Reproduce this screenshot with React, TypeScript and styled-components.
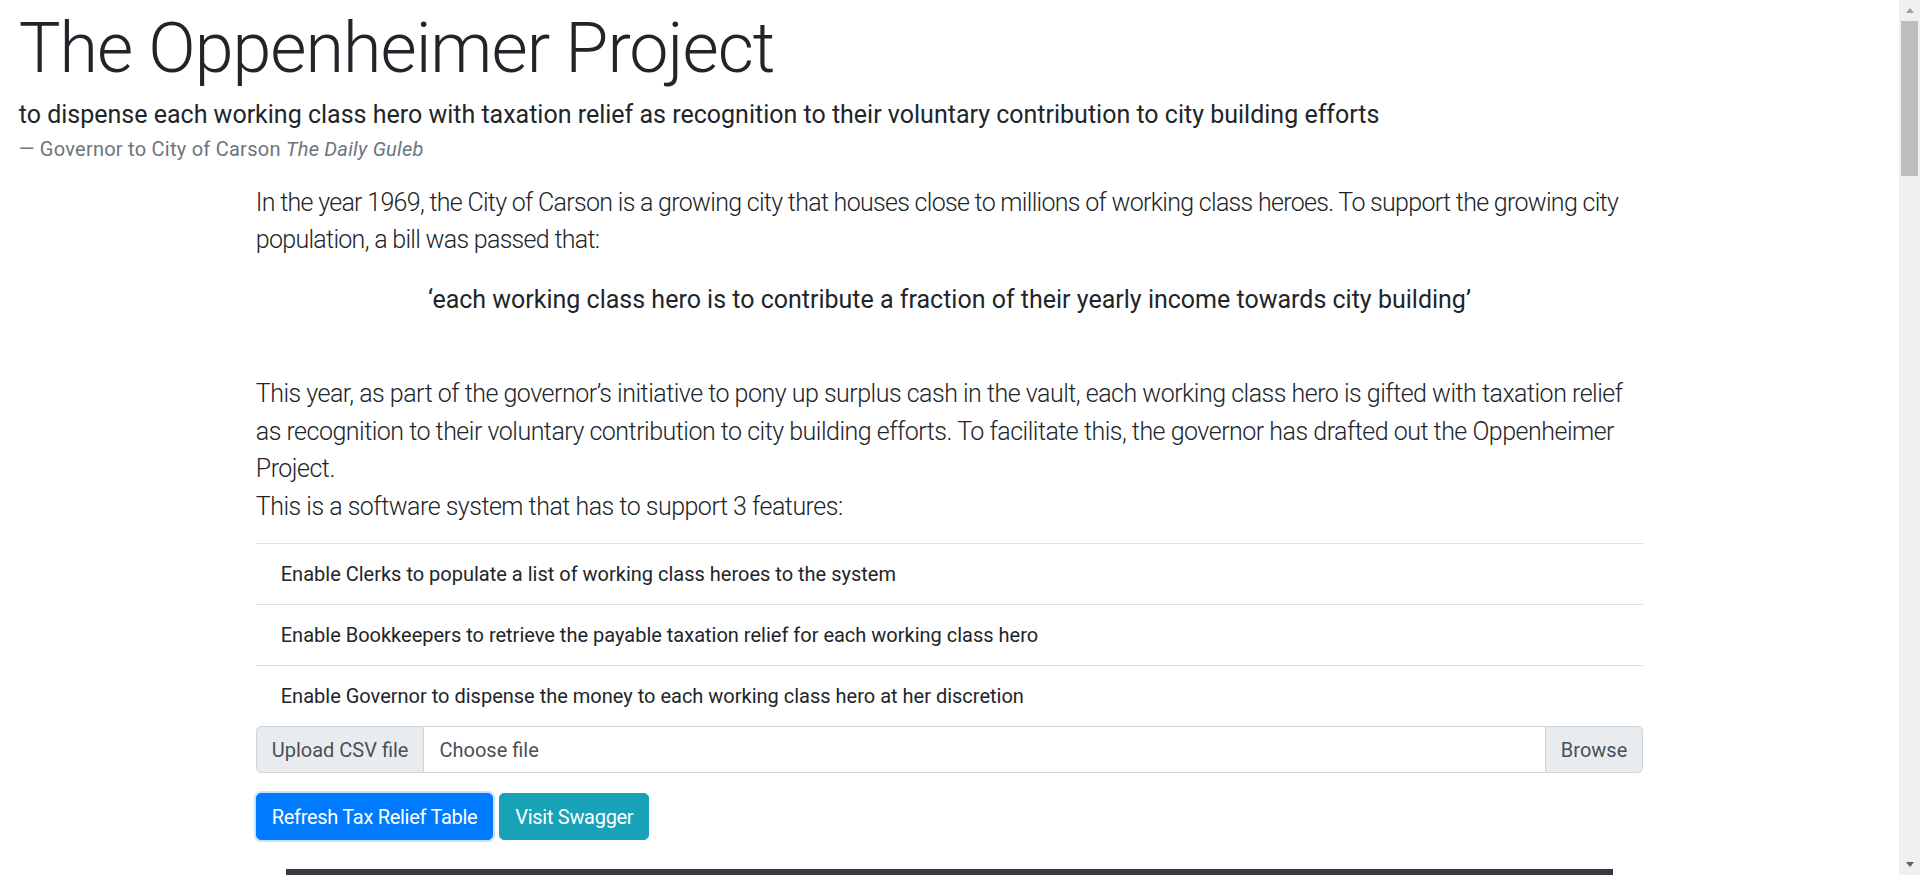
import React from "react";
import styled, { createGlobalStyle } from "styled-components";

const GlobalStyle = createGlobalStyle`
  html { font-size: 20px; }
  body {
    margin: 0;
    padding-right: 21px;
    font-family: "Segoe UI", Roboto, Lato, Arial, sans-serif;
    font-size: 1rem;
    line-height: 1.5;
    color: #212529;
    background: #fff;
  }
  *, *::before, *::after { box-sizing: border-box; }
`;

const ScrollTrack = styled.div`
  position: fixed;
  top: 0;
  right: 0;
  width: 21px;
  height: 100vh;
  background: #f0f0f0;
  display: flex;
  flex-direction: column;
  align-items: center;
`;

const ScrollArrow = styled.div<{ $dir: "up" | "down" }>`
  flex: 0 0 21px;
  width: 21px;
  display: flex;
  align-items: center;
  justify-content: center;
  &::before {
    content: "";
    border-left: 4.5px solid transparent;
    border-right: 4.5px solid transparent;
    ${(p) =>
      p.$dir === "up"
        ? "border-bottom: 5px solid #a3a3a3;"
        : "border-top: 5px solid #606060;"}
  }
`;

const ScrollThumb = styled.div`
  width: 17px;
  height: 155px;
  background: #bdbdbd;
`;

const Spacer = styled.div`
  flex: 1;
`;

const Header = styled.header`
  padding: 0 18.75px;
`;

const Title = styled.h1`
  margin: 6px 0 6px;
  font-size: 3.5rem;
  font-weight: 300;
  line-height: 1.2;
  letter-spacing: -1px;
`;

const Quote = styled.blockquote`
  margin: 0 0 18px;
  font-size: 1.25rem;
`;

const QuoteText = styled.p`
  margin: 0;
`;

const QuoteFooter = styled.footer`
  display: block;
  font-size: 80%;
  color: #6c757d;
  letter-spacing: 0.25px;
`;

const Container = styled.main`
  max-width: 1425px;
  margin: 0 auto;
  padding: 0 18.75px;
`;

const Lead = styled.p<{ $tracking?: number }>`
  margin: 0 0 18px;
  padding-top: 2px;
  font-size: 1.25rem;
  font-weight: 300;
  letter-spacing: ${(p) => p.$tracking ?? -0.5}px;
`;

const CentreQuote = styled.p`
  margin: 0 0 55px;
  padding-top: 4px;
  font-size: 1.25rem;
  text-align: center;
`;

const ListGroup = styled.ul`
  list-style: none;
  margin: 0;
  padding: 0;
`;

const ListItem = styled.li`
  padding: 0.75rem 1.25rem;
  border-top: 1px solid rgba(0, 0, 0, 0.125);
`;

const InputGroup = styled.div`
  display: flex;
  align-items: stretch;
  color: #495057;
`;

const Addon = styled.span<{ $side: "left" | "right" }>`
  display: flex;
  align-items: center;
  padding: 0.375rem 0.75rem;
  line-height: 1.5;
  background: #e9ecef;
  border: 1px solid #ced4da;
  border-radius: ${(p) => (p.$side === "left" ? "5px 0 0 5px" : "0 5px 5px 0")};
  white-space: nowrap;
`;

const FileLabel = styled.span`
  flex: 1;
  padding: 0.375rem 0.75rem;
  line-height: 1.5;
  border-top: 1px solid #ced4da;
  border-bottom: 1px solid #ced4da;
`;

const ButtonRow = styled.div`
  display: flex;
  gap: 6px;
  margin-top: 1rem;
`;

const Button = styled.button<{ $variant: "primary" | "info"; $focused?: boolean }>`
  font-family: inherit;
  font-size: 1rem;
  line-height: 1.5;
  letter-spacing: -0.3px;
  padding: 0.375rem 0.75rem;
  border-radius: 5px;
  color: #fff;
  cursor: pointer;
  background: ${(p) => (p.$variant === "primary" ? "#007bff" : "#17a2b8")};
  border: 1px solid ${(p) => (p.$variant === "primary" ? "#007bff" : "#17a2b8")};
  box-shadow: ${(p) => (p.$focused ? "0 0 0 2px rgba(38, 143, 255, 0.25)" : "none")};
`;

const Table = styled.table`
  width: calc(100% - 60px);
  margin: 29px 30px 0;
  border-collapse: collapse;
  color: #fff;
  background: #343a40;
`;

const HeadCell = styled.th`
  padding: 0.75rem;
  text-align: left;
  font-weight: 700;
  border-bottom: 2px solid #454d55;
`;

const Cell = styled.td`
  padding: 0.75rem;
  border-top: 1px solid #454d55;
`;

const features = [
  "Enable Clerks to populate a list of working class heroes to the system",
  "Enable Bookkeepers to retrieve the payable taxation relief for each working class hero",
  "Enable Governor to dispense the money to each working class hero at her discretion",
];

const rows = Array.from({ length: 58 }, (_, i) => ({
  id: `S${String(1000000 + i * 7919).slice(1)}${String.fromCharCode(65 + (i % 26))}`,
  relief: (1200 + ((i * 3371) % 9000) + ((i * 37) % 100) / 100).toFixed(2),
}));

export default function App() {
  return (
    <>
      <GlobalStyle />
      <Header>
        <Title>The Oppenheimer Project</Title>
        <Quote>
          <QuoteText>
            to dispense each working class hero with taxation relief as recognition to their voluntary
            contribution to city building efforts
          </QuoteText>
          <QuoteFooter>
            — Governor to City of Carson <cite>The Daily Guleb</cite>
          </QuoteFooter>
        </Quote>
      </Header>
      <Container>
        <Lead $tracking={-0.7}>
          In the year 1969, the City of Carson is a growing city that houses close to millions of working
          class heroes. To support the growing city population, a bill was passed that:
        </Lead>
        <CentreQuote>
          ‘each working class hero is to contribute a fraction of their yearly income towards city building’
        </CentreQuote>
        <Lead>
          This year, as part of the governor’s initiative to pony up surplus cash in the vault, each working
          class hero is gifted with taxation relief as recognition to their voluntary contribution to city
          building efforts. To facilitate this, the governor has drafted out the Oppenheimer Project.
          <br />
          This is a software system that has to support 3 features:
        </Lead>
        <ListGroup>
          {features.map((f) => (
            <ListItem key={f}>{f}</ListItem>
          ))}
        </ListGroup>
        <InputGroup>
          <Addon $side="left">Upload CSV file</Addon>
          <FileLabel>Choose file</FileLabel>
          <Addon $side="right">Browse</Addon>
        </InputGroup>
        <ButtonRow>
          <Button $variant="primary" $focused>
            Refresh Tax Relief Table
          </Button>
          <Button $variant="info">Visit Swagger</Button>
        </ButtonRow>
        <Table>
          <thead>
            <tr>
              <HeadCell>#</HeadCell>
              <HeadCell>NatId</HeadCell>
              <HeadCell>Relief</HeadCell>
            </tr>
          </thead>
          <tbody>
            {rows.map((r, i) => (
              <tr key={r.id}>
                <Cell>{i + 1}</Cell>
                <Cell>{r.id}</Cell>
                <Cell>{r.relief}</Cell>
              </tr>
            ))}
          </tbody>
        </Table>
      </Container>
      <ScrollTrack aria-hidden>
        <ScrollArrow $dir="up" />
        <ScrollThumb />
        <Spacer />
        <ScrollArrow $dir="down" />
      </ScrollTrack>
    </>
  );
}
